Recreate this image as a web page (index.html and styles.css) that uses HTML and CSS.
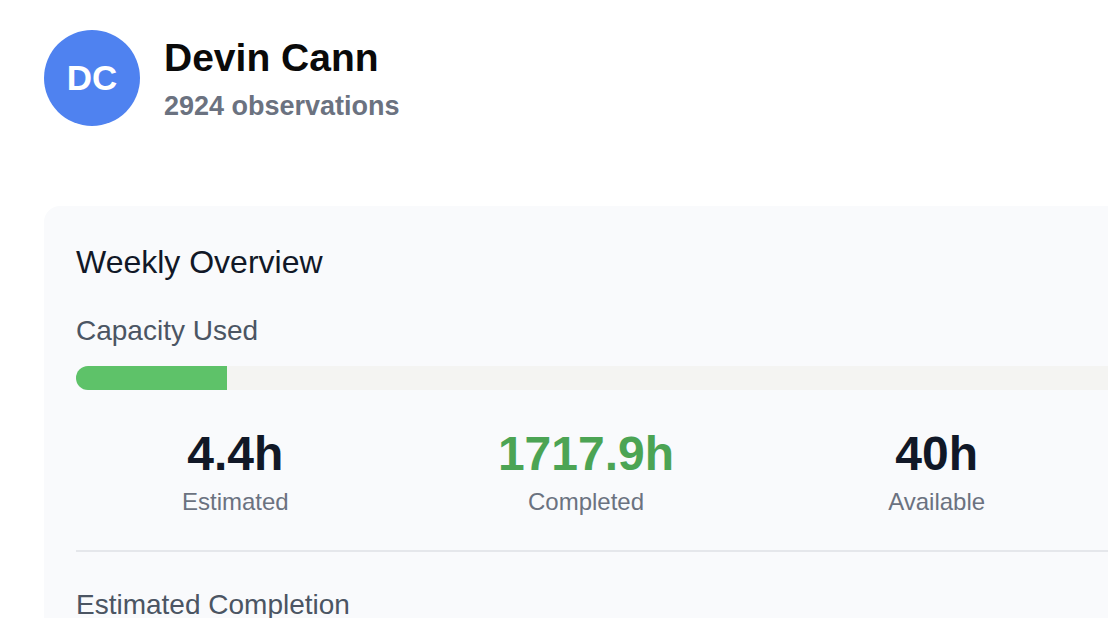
FILE: index.html
```html
<!DOCTYPE html>
<html lang="en">
<head>
<meta charset="utf-8">
<meta name="viewport" content="width=device-width, initial-scale=1">
<title>Devin Cann</title>
<link rel="stylesheet" href="styles.css">
</head>
<body>
<main class="page">
  <header class="profile">
    <div class="avatar">DC</div>
    <div class="identity">
      <h1 class="name">Devin Cann</h1>
      <p class="observations">2924 observations</p>
    </div>
  </header>
  <section class="overview">
    <h2 class="overview-title">Weekly Overview</h2>
    <p class="label" id="capacity-label">Capacity Used</p>
    <div class="bar" role="progressbar" aria-labelledby="capacity-label" aria-valuenow="11" aria-valuemin="0" aria-valuemax="100">
      <div class="bar-fill"></div>
    </div>
    <div class="stats">
      <div class="stat"><div class="value">4.4h</div><div class="caption">Estimated</div></div>
      <div class="stat"><div class="value value-done">1717.9h</div><div class="caption">Completed</div></div>
      <div class="stat"><div class="value">40h</div><div class="caption">Available</div></div>
    </div>
    <div class="completion">
      <p class="label">Estimated Completion</p>
    </div>
  </section>
</main>
</body>
</html>
```
FILE: styles.css
```css
* { box-sizing: border-box; }

body {
  margin: 0;
  background: #ffffff;
  color: #0a0a0a;
  font-family: "Liberation Sans", Arial, sans-serif;
  overflow: hidden;
}

h1, h2, p { margin: 0; }

.page {
  height: 100vh;
  padding: 30px 0 0 44px;
  overflow: hidden;
}

.profile {
  display: flex;
  align-items: center;
  gap: 24px;
}

.avatar {
  display: flex;
  align-items: center;
  justify-content: center;
  width: 96px;
  height: 96px;
  border-radius: 50%;
  background: #4f82f0;
  color: #ffffff;
  font-size: 35px;
  font-weight: 700;
}

.name {
  font-size: 39px;
  line-height: 56px;
  font-weight: 700;
}

.observations {
  color: #6b7280;
  font-size: 27px;
  line-height: 40px;
  font-weight: 700;
}

.overview {
  margin-top: 80px;
  margin-right: -32px;
  padding: 32px;
  border-radius: 16px;
  background: #f9fafc;
}

.overview-title {
  color: #111827;
  font-size: 32px;
  line-height: 48px;
  font-weight: 400;
}

.label {
  color: #4b5563;
  font-size: 28px;
  line-height: 42px;
}

.overview-title + .label { margin-top: 24px; }

.bar {
  height: 24px;
  margin-top: 14px;
  margin-right: -340px;
  border-radius: 12px;
  background: #f4f4f2;
  overflow: hidden;
}

.bar-fill {
  width: 11%;
  height: 100%;
  background: #5ec269;
}

.stats {
  display: grid;
  grid-template-columns: repeat(3, 1fr);
  gap: 32px;
  margin-top: 32px;
  padding-right: 12px;
  text-align: center;
}

.value {
  color: #111827;
  font-size: 48px;
  line-height: 64px;
  font-weight: 700;
}

.value-done { color: #4ca454; }

.caption {
  color: #6b7280;
  font-size: 24px;
  line-height: 32px;
}

.completion {
  margin-top: 32px;
  margin-right: -32px;
  padding-top: 32px;
  border-top: 2px solid #e5e7eb;
}
```
